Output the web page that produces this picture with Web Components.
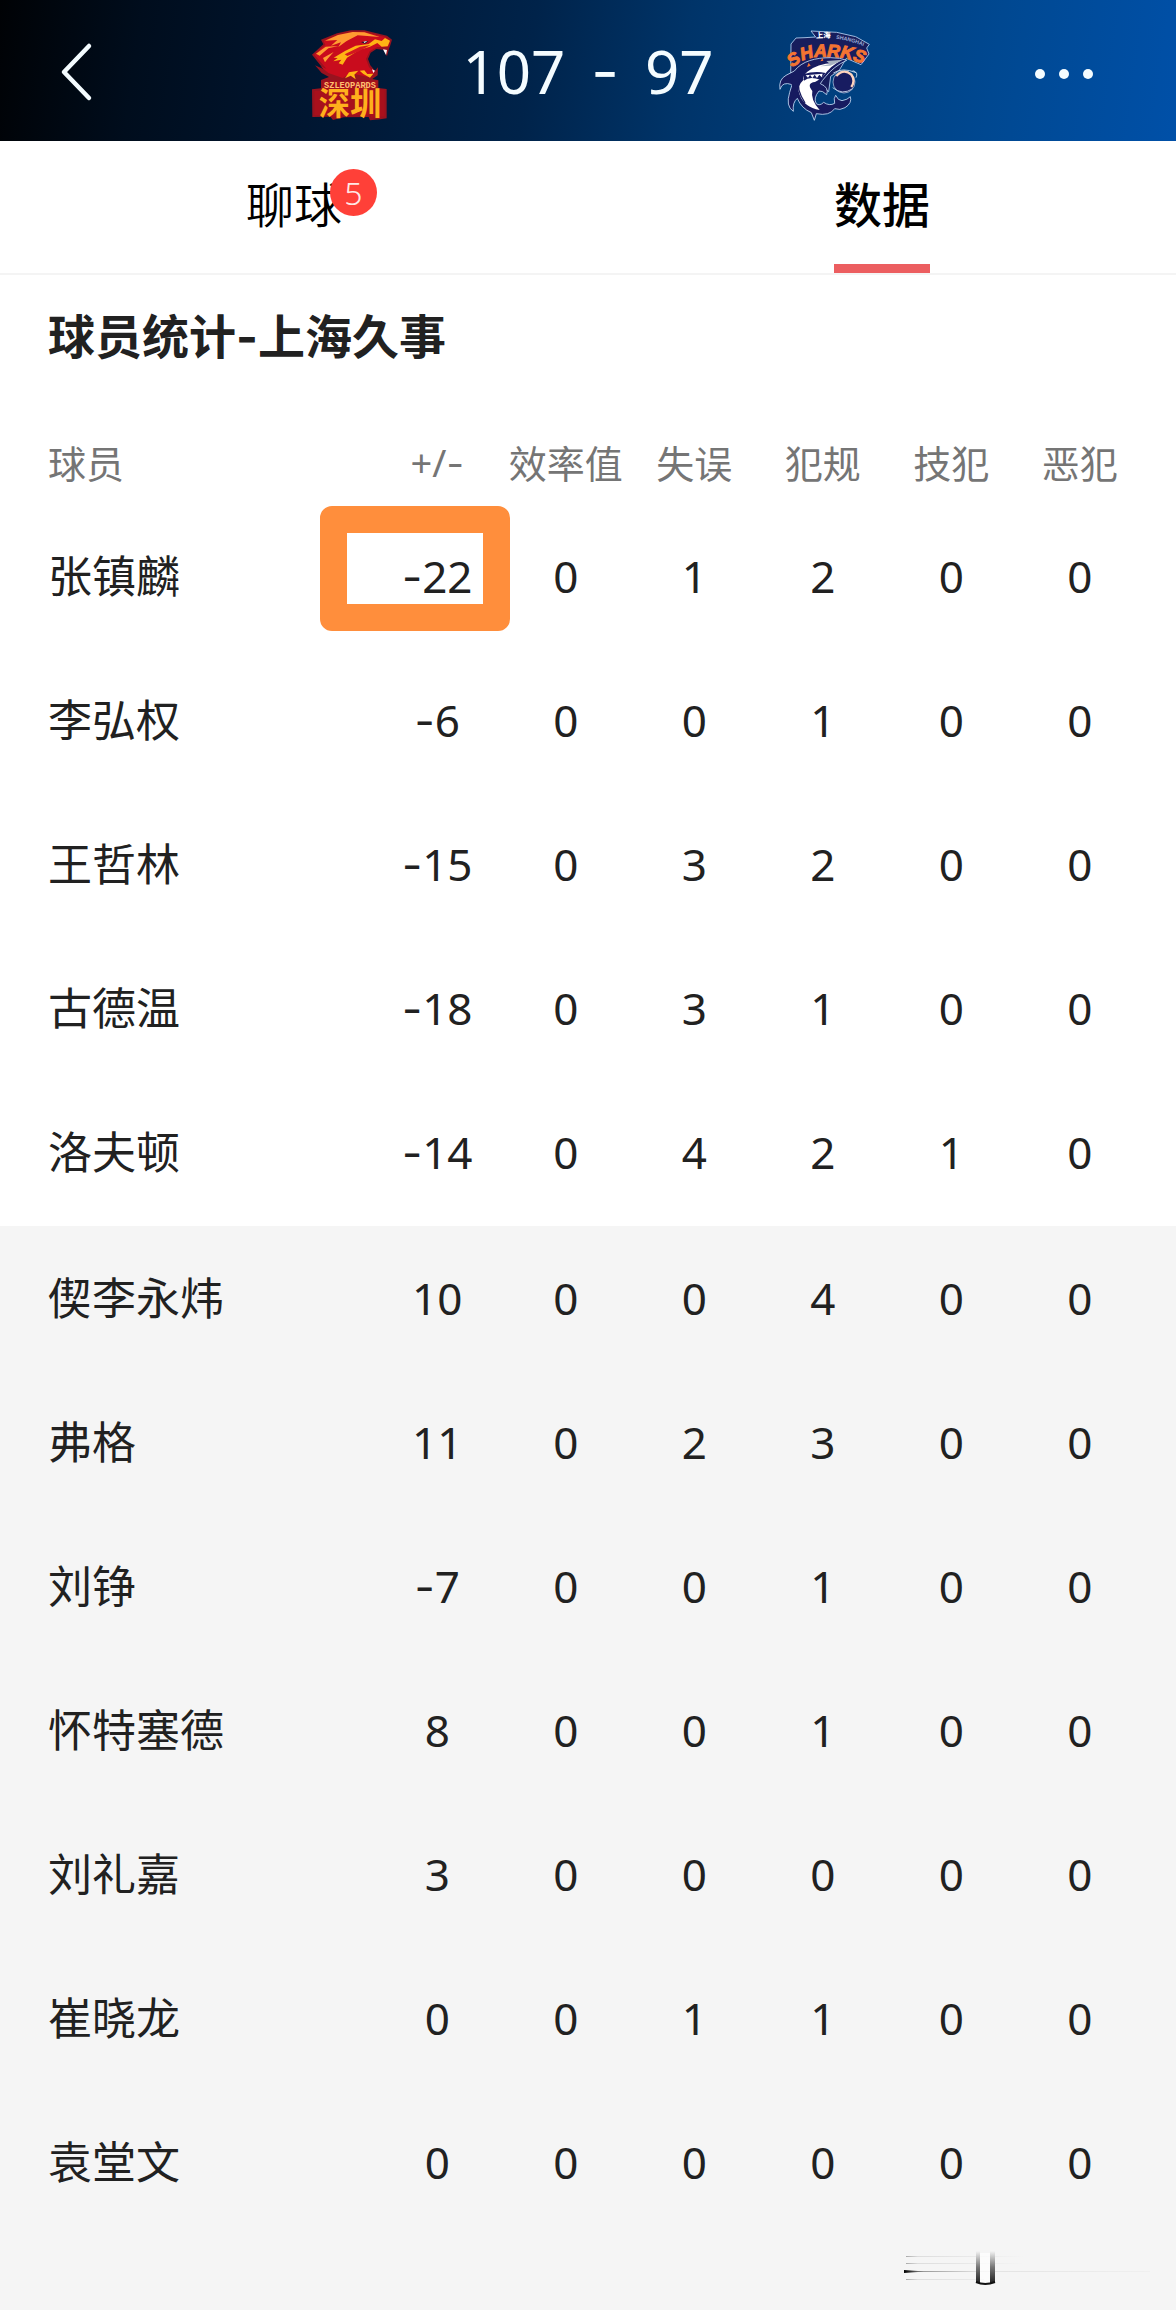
<!DOCTYPE html>
<html lang="zh-CN">
<head>
<meta charset="utf-8">
<meta name="viewport" content="width=device-width, initial-scale=1">
<title>球员统计</title>
<style>
  body { margin: 0; background: #fff; }
</style>
</head>
<body>
<match-page></match-page>

<template id="match-page">
  <style>
    :host {
      display: flex; flex-direction: column; min-height: 100vh;
      font-family: "Noto Sans", "Noto Sans CJK SC", sans-serif;
      color: #212121; background: #fff;
    }
    page-foot { flex: 1; }
    .dash { font-family: Inter, sans-serif; }
  </style>
  <score-header home="107" away="97">
    <leopards-logo slot="home-logo"></leopards-logo>
    <sharks-logo slot="away-logo"></sharks-logo>
  </score-header>
  <tab-bar>
    <tab-item badge="5">聊球</tab-item>
    <tab-item selected>数据</tab-item>
  </tab-bar>
  <player-stats>球员统计<span class="dash">-</span>上海久事</player-stats>
  <page-foot></page-foot>
</template>

<template id="score-header">
  <style>
    :host {
      display: grid; grid-template-columns: 1fr auto 1fr; align-items: center;
      height: 141px; color: #f4fcff;
      background: linear-gradient(98deg, #000205 0%, #000d1d 12%, #001631 27%, #00234a 45%, #003469 58%, #004080 72%, #004891 84%, #0050a8 100%);
    }
    button { border: 0; padding: 0; background: none; color: inherit; display: flex; }
    .back { justify-self: start; margin-left: 48px; }
    .more { justify-self: end; margin-right: 80px; }
    .match { display: flex; align-items: center; gap: 61px; }
    .score { display: flex; gap: 26px; font-size: 60px; line-height: 84px; }
    .dash { font-family: Inter, sans-serif; }
  </style>
  <button class="back" aria-label="返回">
    <svg width="56" height="72" viewBox="0 0 56 72" fill="none" stroke="currentColor" stroke-width="4.5" stroke-linecap="round" stroke-linejoin="round"><path d="M41 11 16 37 41 63"/></svg>
  </button>
  <div class="match">
    <slot name="home-logo"></slot>
    <div class="score"><span id="home"></span><span class="dash">-</span><span id="away"></span></div>
    <slot name="away-logo"></slot>
  </div>
  <button class="more" aria-label="更多">
    <svg width="64" height="20" viewBox="0 0 64 20" fill="currentColor"><circle cx="8" cy="13" r="5"/><circle cx="32" cy="13" r="5"/><circle cx="56" cy="13" r="5"/></svg>
  </button>
</template>

<template id="leopards-logo">
  <style>:host { display: block; } svg { display: block; }</style>
  <svg width="100" height="110" viewBox="0 -14 300 330" role="img">
    <path fill="#98131f" d="M33 102 67 71 60 57 108 38 150 29 190 29 258 45 273 57 268 74 264 84 258 107 247 87 226 85 209 96 201 115 208 134 222 150 231 140 230 164 214 175 232 179 232 202 257 205 257 293 238 296 207 299 203 289 128 290 96 298 88 288 34 289 33 206 60 203 60 178 84 169 62 157 42 134 67 145 57 132Z"/>
    <path fill="#c90c1d" d="M40 102 73 72 67 60 111 43 154 34 190 34 253 49 267 60 262 78 228 80 206 92 195 115 204 139 220 157 205 170 150 158 125 172 82 157 58 137 76 144Z"/>
    <path fill="#ff9c31" d="M72 60 111 43 155 34 190 35 236 49 170 44 137 61 112 79 120 65 90 75 109 58ZM45 99 74 78 112 76 82 83 56 105ZM66 112 98 94 82 112 72 125Z"/>
    <path fill="#ffb414" d="M252 52 267 60 260 77 242 78 229 67 207 78 176 87 138 111 125 132 113 128 121 117 97 122 110 112 98 111 132 91 164 75 203 70 222 56 242 61ZM132 173 144 155 172 150 160 162 164 176 149 165ZM176 150 190 149 199 160 217 159 207 171 187 160Z"/>
    <path fill="#d31620" d="M131 101 177 78 209 73 174 92 139 106Z"/>
    <path fill="#06172e" d="M180 64 202 61 192 69Z"/>
    <path fill="#fff" d="M187 63 199 61 191 67ZM246 86 258 88 255 103ZM213 146 222 150 217 157Z"/>
    <path fill="#a8101c" d="M65 182H228V207H251V287L211 292 207 282 128 284 96 290 91 282 40 284V211H65Z"/>
    <text x="147" y="282" text-anchor="middle" font-family="Noto Sans CJK SC, sans-serif" font-weight="700" font-size="94" fill="#ffb01c">深圳</text>
    <text x="147" y="201" text-anchor="middle" font-family="Liberation Mono, monospace" font-weight="700" font-size="26" fill="#ffc070">SZLEOPARDS</text>
  </svg>
</template>

<template id="sharks-logo">
  <style>:host { display: block; } svg { display: block; overflow: visible; }</style>
  <svg width="100" height="110" viewBox="15 -14 300 330" role="img">
    <defs><path id="arc" d="M68 142Q104 104 172 109Q229 107 292 134"/><path id="top" d="M138 53Q206 46 288 79"/></defs>
    <path fill="#171d5c" stroke="#b9d6f5" stroke-width="2.5" d="M123 31 200 35 257 48 298 71 290 82 297 100 273 132 229 113 207 150 182 167 176 213 132 180 98 141 62 182 63 70 78 52 105 51 137 49Z"/>
    <text font-family="Noto Sans CJK SC, sans-serif" font-weight="900" font-size="22" fill="#fff"><textPath href="#top">上海</textPath></text>
    <text font-family="Liberation Sans, sans-serif" font-weight="700" font-size="16" fill="#9eafd8"><textPath href="#top" startOffset="60">SHANGHAI</textPath></text>
    <text font-family="Liberation Sans, sans-serif" font-weight="700" font-style="italic" font-size="53" fill="#f47432" stroke="#f47432" stroke-width="3"><textPath href="#arc">SHARKS</textPath></text>
    <path fill="#171b60" stroke="#c5ddf6" stroke-width="2.5" stroke-linejoin="round" d="M73 151C96 121 137 111 182 111Q212 111 230 119Q190 138 167 168Q156 180 151 189Q178 200 170 222Q157 209 147 211Q129 233 139 249Q149 257 161 245Q178 257 194 248Q190 232 197 224Q204 240 216 240Q233 237 241 228Q247 247 225 261Q210 270 194 264Q178 287 139 279L133 299 124 276Q94 263 82 233Q67 245 70 272Q46 257 59 215L66 192Q37 181 30 206Q25 177 48 164Z"/>
    <path fill="#fff" d="M112 153Q142 129 190 127L213 120Q184 133 162 164 155 174 135 184 108 187 127 211 121 237 149 268Q102 259 89 222 78 197 101 177Q95 168 112 153Z"/>
    <path fill="#a9b4c2" d="M169 121 220 117 181 135 150 137 180 130Z"/>
    <path fill="#171b60" d="M100 161Q134 149 167 157L151 177Q118 166 102 180Z"/>
    <path fill="#fff" d="M107 164 114 171 120 162 127 172 134 162 141 172 148 162 155 170 158 159Z"/>
    <path fill="#f47432" d="M111 139 116 126 122 135ZM151 122 158 111 160 120Z"/>
    <path fill="none" stroke="#171b60" stroke-width="4" d="M76 160Q54 175 75 207M88 176Q77 205 105 247"/>
    <circle cx="222" cy="184" r="33" fill="#181c61" stroke="#bed5ef" stroke-width="2"/>
    <path fill="none" stroke="#ffd4bd" stroke-width="7" d="M199 166Q221 142 244 162Q257 179 244 199"/>
    <path fill="none" stroke="#d4e5f7" stroke-width="2.5" d="M190 157Q218 139 258 156M248 150Q266 154 258 171M188 201Q217 225 248 204"/>
  </svg>
</template>

<template id="tab-bar">
  <style>
    :host { display: flex; border-bottom: 2px solid #f4f4f4; }
    ::slotted(tab-item) { flex: 1; }
  </style>
  <slot></slot>
</template>

<template id="tab-item">
  <style>
    :host { display: flex; justify-content: center; }
    button {
      position: relative; display: block; height: 132px; padding: 0 0 2px; border: 0;
      border-bottom: 9px solid transparent; background: none; box-sizing: border-box;
      font: 350 48px/72px "Noto Sans CJK SC", sans-serif; color: #000;
    }
    :host([selected]) button { font-weight: 500; border-bottom-color: #ec5e60; }
    .badge {
      position: absolute; left: 84px; top: 28px; width: 47px; height: 47px; border-radius: 50%;
      background: #ff4038; color: #ffe9e6; font: 300 32px/47px "Noto Sans", sans-serif; text-align: center;
    }
    .badge:empty { display: none; }
  </style>
  <button><slot></slot><span class="badge"></span></button>
</template>

<template id="player-stats">
  <style>
    :host { display: block; }
    h2 { margin: 0; padding: 25px 48px 0; font-size: 47px; line-height: 72px; font-weight: 700; }
    table { width: 100%; border-collapse: collapse; table-layout: fixed; margin-top: 46px; }
    th, td { padding: 0; text-align: center; white-space: nowrap; font-weight: 400; }
    .name { width: 325px; padding-left: 48px; text-align: left; }
    .edge { width: 32px; }
    .dash { font-family: Inter, sans-serif; }
    thead { color: #757575; }
    thead th { height: 87px; font-size: 38px; line-height: 56px; }
    tbody th, tbody td { height: 144px; font-size: 44px; line-height: 64px; box-sizing: border-box; }
    .starters th, .starters td { padding-bottom: 4px; }
    .bench { background: #f5f5f5; }
    .marked { position: relative; }
    .marked::after {
      content: ""; position: absolute; left: -53px; top: 0; width: 190px; height: 125px;
      box-sizing: border-box; border: 27px solid #ff8e3c; border-radius: 12px;
    }
  </style>
  <h2><slot></slot></h2>
  <table>
    <thead><tr></tr></thead>
    <tbody class="starters"></tbody>
    <tbody class="bench"></tbody>
  </table>
</template>

<template id="page-foot">
  <style>
    :host { display: flex; justify-content: flex-end; min-height: 75px; background: #f5f5f5; }
    svg { display: block; margin: 16px 24px 0 0; }
  </style>
  <svg width="248" height="40" viewBox="0 0 248 40" aria-hidden="true">
    <defs>
      <linearGradient id="fade"><stop stop-color="#000"/><stop offset=".08" stop-color="#999"/><stop offset=".3" stop-color="#e2e2e2"/><stop offset="1" stop-color="#f0f0f0"/></linearGradient>
      <linearGradient id="faint"><stop stop-color="#aaa"/><stop offset=".1" stop-color="#ddd"/><stop offset="1" stop-color="#f5f5f5"/></linearGradient>
      <linearGradient id="rise" x1="0" y1="1" x2="0" y2="0"><stop stop-color="#222"/><stop offset=".5" stop-color="#777"/><stop offset="1" stop-color="#f5f5f5"/></linearGradient>
    </defs>
    <path fill="url(#faint)" d="M2 6H120V7H2ZM2 13H120V14H2ZM2 29H80V30H2Z"/>
    <path fill="url(#fade)" d="M0 20 14 21H246V22H14L0 23Z"/>
    <path fill="url(#rise)" d="M72 1H76V33H72ZM86 1H91V33H86Z"/>
    <path fill="#fff" d="M76 3H86V32H76Z" opacity=".7"/>
    <path fill="none" stroke="#111" stroke-width="2" d="M72 32Q81 36 91 32"/>
  </svg>
</template>

<script>
  const attach = (el) => {
    const root = el.attachShadow({ mode: 'open' });
    root.append(document.getElementById(el.localName).content.cloneNode(true));
    return root;
  };

  class Basic extends HTMLElement {
    constructor() { super(); attach(this); }
  }

  customElements.define('leopards-logo', class extends Basic {});
  customElements.define('sharks-logo', class extends Basic {});
  customElements.define('tab-bar', class extends Basic {});
  customElements.define('page-foot', class extends Basic {});

  customElements.define('score-header', class extends Basic {
    connectedCallback() {
      for (const side of ['home', 'away']) {
        this.shadowRoot.getElementById(side).textContent = this.getAttribute(side);
      }
    }
  });

  customElements.define('tab-item', class extends Basic {
    connectedCallback() {
      this.shadowRoot.querySelector('.badge').textContent = this.getAttribute('badge') || '';
    }
  });

  const COLUMNS = ['球员', '+/-', '效率值', '失误', '犯规', '技犯', '恶犯'];
  const STARTERS = [
    ['张镇麟', -22, 0, 1, 2, 0, 0],
    ['李弘权', -6, 0, 0, 1, 0, 0],
    ['王哲林', -15, 0, 3, 2, 0, 0],
    ['古德温', -18, 0, 3, 1, 0, 0],
    ['洛夫顿', -14, 0, 4, 2, 1, 0]
  ];
  const BENCH = [
    ['偰李永炜', 10, 0, 0, 4, 0, 0],
    ['弗格', 11, 0, 2, 3, 0, 0],
    ['刘铮', -7, 0, 0, 1, 0, 0],
    ['怀特塞德', 8, 0, 0, 1, 0, 0],
    ['刘礼嘉', 3, 0, 0, 0, 0, 0],
    ['崔晓龙', 0, 0, 1, 1, 0, 0],
    ['袁堂文', 0, 0, 0, 0, 0, 0]
  ];

  customElements.define('player-stats', class extends Basic {
    connectedCallback() {
      const root = this.shadowRoot;
      const edge = '<td class="edge"></td>';
      const dashed = (v) => String(v).replace('-', '<span class="dash">-</span>');
      root.querySelector('thead tr').innerHTML =
        COLUMNS.map((c, i) => `<th scope="col"${i ? '' : ' class="name"'}>${dashed(c)}</th>`).join('') + edge;
      const row = ([name, ...values]) =>
        `<tr><th scope="row" class="name">${name}</th>` +
        values.map((v) => `<td${v === -22 ? ' class="marked"' : ''}>${dashed(v)}</td>`).join('') + edge + '</tr>';
      root.querySelector('.starters').innerHTML = STARTERS.map(row).join('');
      root.querySelector('.bench').innerHTML = BENCH.map(row).join('');
    }
  });

  customElements.define('match-page', class extends Basic {});
</script>
</body>
</html>
